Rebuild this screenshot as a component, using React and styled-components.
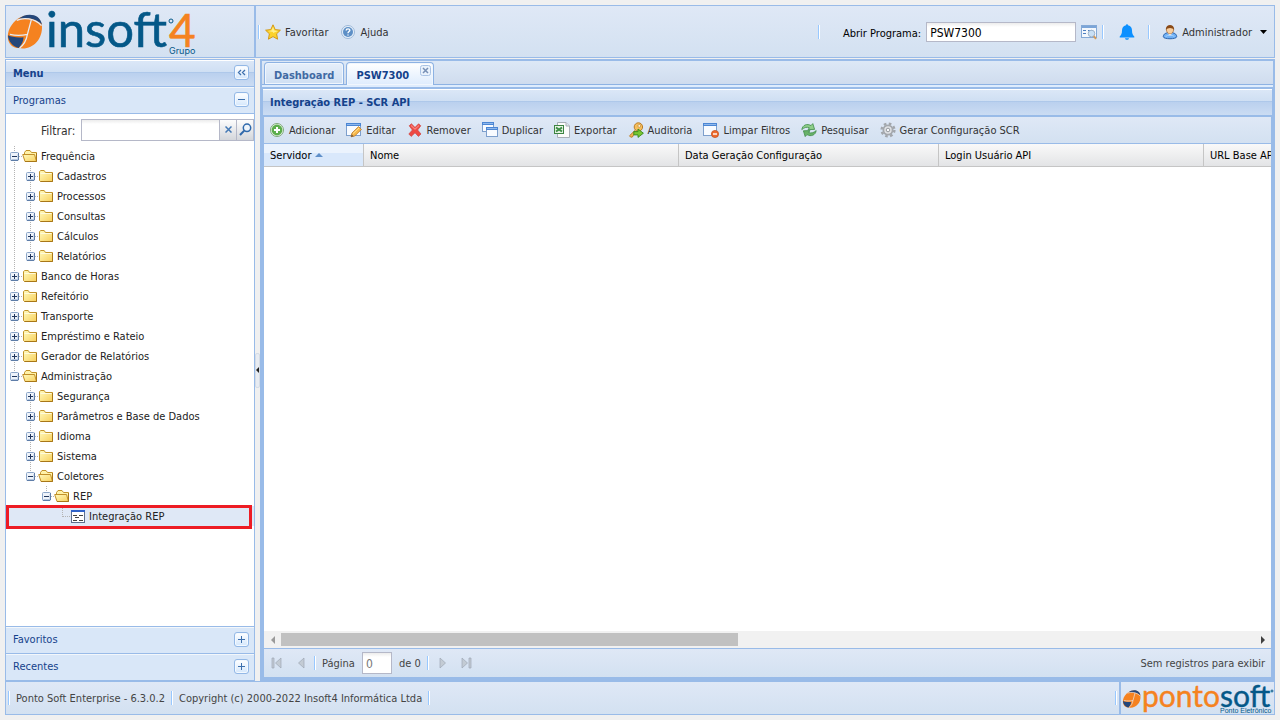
import React from "react";
import styled, { createGlobalStyle, css } from "styled-components";

const c = {
  border: "#99bbe8",
  title: "#15428b",
  text: "#333333",
  bar: "linear-gradient(#dfe8f6, #d3e1f1)",
  font: '"DejaVu Sans Condensed", Tahoma, "DejaVu Sans", sans-serif',
};

const GlobalStyle = createGlobalStyle`
  *, *::before, *::after { box-sizing: border-box; }
  body { margin: 0; background: #f0f0f0; font: 11px/14px ${c.font}; color: ${c.text}; }
  button, input { font: inherit; color: inherit; }
  button { margin: 0; padding: 0; border: 0; background: none; cursor: pointer; }
  svg { display: block; flex: none; }
  ul { margin: 0; padding: 0; list-style: none; }
`;

/* ---------- page frame ---------- */
const Page = styled.div`
  display: flex;
  flex-direction: column;
  min-height: 100vh;
  padding: 5px;
`;
const Header = styled.header`
  display: flex;
  height: 53px;
  margin-bottom: 1px;
  border: 1px solid ${c.border};
  background: ${c.bar};
`;
const Brand = styled.a`
  flex: none;
  width: 250px;
  border-right: 2px solid ${c.border};
`;
const LogoSvg = styled.svg`
  overflow: visible;
`;
const TopBar = styled.div`
  flex: 1;
  display: flex;
  align-items: center;
  min-width: 0;
  padding: 1px 7px 0 2px;
`;
const Spacer = styled.div`
  flex: 1;
`;
const Separator = styled.span`
  flex: none;
  width: 2px;
  height: 14px;
  border-left: 1px solid #98c8ff;
  border-right: 1px solid #fff;
`;
const Text = styled.span`
  padding-top: 2px;
  white-space: nowrap;
`;
const BarButton = styled.button`
  display: flex;
  align-items: center;
  gap: 4px;
  white-space: nowrap;
`;
const TopGroup = styled.div`
  display: flex;
  align-items: center;
  gap: ${(p) => p.$gap}px;
  padding: ${(p) => p.$pad || "0"};
`;
const ProgramLabel = styled.label`
  padding-top: 4px;
  color: #000;
  white-space: nowrap;
`;
const TextInput = styled.input`
  min-width: 0;
  width: ${(p) => p.$width};
  height: ${(p) => p.$height}px;
  padding: 3px 3px 1px;
  border: 1px solid #b5b8c8;
  border-radius: 0;
  outline: 0;
  background: linear-gradient(#ececec, #fff 4px);
  font-size: 12px;
  color: ${(p) => (p.$muted ? "#777" : "#000")};
`;
const Body = styled.div`
  flex: 1;
  display: flex;
  min-height: 0;
`;

/* ---------- side menu ---------- */
const Side = styled.nav`
  flex: none;
  display: flex;
  flex-direction: column;
  width: 250px;
  border: 1px solid ${c.border};
  background: #fff;
`;
const titleBar = css`
  background: linear-gradient(
    #fff 0 1px, #dbe7f7 1px, #cfdff3 12px, #aec8ea 12px 13px, #bad0ee 13px, #cbdcf3
  );
  color: ${c.title};
  font-weight: bold;
`;
const SideTitle = styled.div`
  display: flex;
  align-items: center;
  justify-content: space-between;
  height: 27px;
  padding: 0 5px 0 7px;
  border-bottom: 1px solid ${c.border};
  ${titleBar}
`;
const SectionTitle = styled.div`
  display: flex;
  align-items: center;
  justify-content: space-between;
  height: 27px;
  padding: 0 5px 0 7px;
  border: solid ${c.border};
  border-width: ${(p) => (p.$below ? "1px 0 0" : "0 0 1px")};
  box-shadow: inset 0 1px #f3f7fb;
  background: #d9e7f8;
  color: ${c.title};
`;
const ToolButton = styled.button`
  display: grid;
  place-items: center;
  width: 15px;
  height: 15px;
  margin-bottom: 2px;
  border: 1px solid #93b8e6;
  border-radius: 3px;
  background: linear-gradient(#fff, #d4e7fc);
  box-shadow: inset 0 0 0 1px #f4f9ff;
`;
const FilterRow = styled.div`
  display: flex;
  align-items: center;
  padding: 5px 0 5px 35px;
  color: #000;
  font-size: 12px;
`;
const FilterLabel = styled.label`
  width: 40px;
  padding-top: 2px;
  white-space: nowrap;
  color: ${c.text};
`;
const FilterInput = styled(TextInput)`
  flex: 1;
`;
const Trigger = styled.button`
  flex: none;
  display: grid;
  place-items: center;
  width: 17px;
  height: 22px;
  padding-bottom: 2px;
  border: solid #b5b8c8;
  border-width: 1px 1px 1px 0;
  background: linear-gradient(#fdfdfd, #d3d6db);
`;
const TreeArea = styled.div`
  flex: 1;
`;
const TreeRow = styled.div`
  position: relative;
  display: flex;
  align-items: center;
  height: 20px;
  color: #000;
  white-space: nowrap;
  background: ${(p) => (p.$selected ? "#dfe8f6" : "none")};
`;
const RowText = styled.a`
  padding: 2px 0 0 3px;
  color: #222;
  text-decoration: none;
`;
const Marker = styled.span`
  position: absolute;
  inset: -1px 2px -3px 0;
  border: 3px solid #ed1c24;
`;
const Splitter = styled.div`
  flex: none;
  display: flex;
  align-items: center;
  width: 5px;
`;
const SplitHandle = styled.button`
  display: grid;
  place-items: center;
  width: 5px;
  height: 35px;
  border: 1px solid #d5dce6;
  border-radius: 2px;
  background: #e8ecf2;
`;

/* ---------- work area ---------- */
const Main = styled.main`
  flex: 1;
  display: flex;
  flex-direction: column;
  min-width: 0;
  border: 2px solid ${c.border};
  background: ${c.border};
`;
const TabStrip = styled.div`
  display: flex;
  align-items: flex-end;
  gap: 2px;
  height: 24px;
  padding: 0 2px;
  border-bottom: 1px solid #8db2e3;
  background: linear-gradient(#dde8f6, #cfdcee);
`;
const Tab = styled.button`
  position: relative;
  height: ${(p) => (p.$active ? 23 : 22)}px;
  margin-bottom: ${(p) => (p.$active ? -1 : 0)}px;
  padding: ${(p) => (p.$active ? "4px 24px 0 9px" : "4px 9px 0")};
  border: 1px solid #8db2e3;
  border-bottom: 0;
  border-radius: 4px 4px 0 0;
  box-shadow: inset 0 0 0 1px #f0f6fd;
  background: ${(p) => (p.$active ? "linear-gradient(#fff, #deecfd)" : "linear-gradient(#e6effa, #cfdff3)")};
  color: ${(p) => (p.$active ? c.title : "#416aa3")};
  font-weight: bold;
  white-space: nowrap;
`;
const TabBox = styled.div`
  position: relative;
  display: flex;
  align-items: flex-end;
`;
const TabClose = styled.button`
  position: absolute;
  top: 3px;
  right: 3px;
`;
const TabEdge = styled.div`
  height: 2px;
  background: #deecfd;
`;
const Panel = styled.section`
  flex: 1;
  display: flex;
  flex-direction: column;
  margin-top: 2px;
  padding: 0 1px 2px;
`;
const PanelTitle = styled.h1`
  height: 26px;
  margin: 0;
  padding: 7px 7px 0;
  font-size: 11px;
  line-height: 14px;
  ${titleBar}
`;
const PanelBody = styled.div`
  flex: 1;
  display: flex;
  flex-direction: column;
  margin: 2px 1px 0;
  background: #fff;
`;
const Toolbar = styled.div`
  display: flex;
  align-items: center;
  gap: 11px;
  height: 27px;
  padding: 0 5px;
  border-bottom: 1px solid ${c.border};
  background: ${c.bar};
`;
const GridArea = styled.div`
  flex: 1;
  position: relative;
  overflow: hidden;
`;
const Grid = styled.table`
  position: absolute;
  table-layout: fixed;
  width: 2200px;
  border-collapse: separate;
  border-spacing: 0;
`;
const HeadCell = styled.th`
  height: 23px;
  width: ${(p) => p.$width};
  padding: 0 6px;
  border: solid #c5c5c5;
  border-width: 0 1px 1px 0;
  background: ${(p) =>
    p.$sorted ? "linear-gradient(#ebf3fd 0 9px, #d9e8fb 9px)" : "linear-gradient(#f9f9f9, #e3e4e6)"};
  color: #000;
  font-weight: normal;
  text-align: left;
  white-space: nowrap;
`;
const HeadLabel = styled.span`
  display: flex;
  align-items: center;
  gap: 4px;
`;
const ScrollBar = styled.div`
  display: flex;
  align-items: center;
  height: 17px;
  background: #f1f1f1;
`;
const ScrollButton = styled.button`
  flex: none;
  display: grid;
  place-items: center;
  width: 17px;
  height: 17px;
`;
const ScrollTrack = styled.div`
  flex: 1;
`;
const ScrollThumb = styled.div`
  width: 47%;
  height: 13px;
  background: #c1c1c1;
`;
const Pager = styled.div`
  display: flex;
  align-items: center;
  height: 29px;
  padding: 0 6px 0 7px;
  border-top: 1px solid ${c.border};
  background: ${c.bar};
  color: #444;
`;
const PageButtons = styled.div`
  display: flex;
  align-items: center;
  gap: 14px;
  width: ${(p) => p.$width}px;
`;
const PageNumber = styled.label`
  display: flex;
  align-items: center;
  gap: 7px;
  padding: 0 6px;
`;

/* ---------- footer ---------- */
const Footer = styled.footer`
  display: flex;
  height: 34px;
  border: 1px solid ${c.border};
  background: ${c.bar};
  color: #444;
`;
const FooterBar = styled.div`
  flex: 1;
  display: flex;
  align-items: center;
  gap: 6px;
  padding: 0 2px;
`;
const FooterBrand = styled.a`
  flex: none;
  width: 155px;
  border-left: 2px solid ${c.border};
`;

/* ---------- icons ---------- */
const Svg = ({ w = 16, h = w, children }) => (
  <svg width={w} height={h} viewBox={`0 0 ${w} ${h}`} fill="none" aria-hidden="true">{children}</svg>
);
const StarIcon = () => (
  <Svg>
    <path d="M8 .8 10.2 5.6 15.4 6.2 11.6 9.8 12.6 15.2 8 12.6 3.4 15.2 4.4 9.8 .6 6.2 5.8 5.6Z" fill="#fbd22c" stroke="#d49a17" strokeLinejoin="round" />
    <path d="M8 2.8 9.4 6.4 13 7 8 9Z M3 7 6.4 6.6 8 3V8Z" fill="#fff08c" />
  </Svg>
);
const HelpIcon = () => (
  <Svg>
    <circle cx="8" cy="8" r="6.5" fill="#e9f1fa" stroke="#9db9d9" />
    <circle cx="8" cy="8" r="5" fill="#5d8fc6" />
    <path d="M6.2 6.6C6.2 4.2 10 4.4 9.8 6.4 9.7 7.5 8 7.6 8 9.2M8 10.4V11.6" stroke="#fff" strokeWidth="1.4" />
  </Svg>
);
const FormSearchIcon = () => (
  <Svg>
    <rect x=".5" y="1.5" width="15" height="12" fill="#f4f8fd" stroke="#84a9d6" />
    <path d="M1 2H15V4H1Z" fill="#7ba5d8" />
    <path d="M2 6.5H5M2 9.5H5M7 6.5H12" stroke="#4e7fc0" />
    <circle cx="10.5" cy="9.5" r="3.3" fill="#c9e0f5" stroke="#9eb3cb" />
    <path d="M12.8 12 15 14.8" stroke="#d39a58" strokeWidth="2" />
  </Svg>
);
const BellIcon = () => (
  <Svg>
    <path d="M7 1.2C7-.1 9-.1 9 1.2 12 1.7 13 4 13 6.5 13 10 14 11.2 15.3 12.5V13.6H.7V12.5C2 11.2 3 10 3 6.5 3 4 4 1.7 7 1.2ZM6 14.2H10C9.8 16.4 6.2 16.4 6 14.2Z" fill="#0c90ff" />
  </Svg>
);
const UserIcon = () => (
  <Svg>
    <path d="M1.3 12.8C1.3 9.8 4 8.6 8 8.6S14.7 9.8 14.7 12.8C14.4 15.4 1.6 15.4 1.3 12.8Z" fill="#6fb0f5" stroke="#2f66ad" />
    <path d="M3.5 12.6C5 10.8 11 10.8 12.5 12.6" stroke="#a9d2fb" />
    <path d="M5.4 9.2 8 11.6 10.6 9.2Z" fill="#fff" />
    <path d="M4.4 4.6C4.2 8.4 6.3 9.8 8 9.8S11.8 8.4 11.6 4.6L10 3H6Z" fill="#f8cf9f" stroke="#a5672f" strokeWidth=".7" />
    <path d="M4 6C2.8-.6 13.2-.6 12 6 11.4 4.2 9.4 4.6 8 4 6.6 4.6 4.6 4.2 4 6Z" fill="#8a4a17" />
  </Svg>
);
const DownArrow = () => <Svg w={7} h={4}><path d="M0 0H7L3.5 4Z" fill="#000" /></Svg>;
const AddIcon = () => (
  <Svg>
    <circle cx="8" cy="8" r="6.5" fill="#eef6ec" stroke="#7ea87a" />
    <circle cx="8" cy="8" r="5.4" fill="#5cae4c" />
    <path d="M8 5V11M5 8H11" stroke="#fff" strokeWidth="2" />
  </Svg>
);
const Win = ({ x = 0, y = 0, w = 14, h = 12 }) => (
  <>
    <rect x={x + 0.5} y={y + 0.5} width={w - 1} height={h - 1} fill="#f8fbff" stroke="#7d9fcc" />
    <path d={`M${x} ${y}H${x + w}V${y + 3}H${x}Z`} fill="#4b86d4" />
    <path d={`M${x + 1} ${y + 1.5}H${x + w - 1}`} stroke="#8fb8ec" />
  </>
);
const EditIcon = () => (
  <Svg>
    <Win x={0} y={1} w={15} h={13} />
    <path d="M5 14.8 6 11 12.6 4.6 15.4 7.4 8.8 14Z" fill="#f8b84a" stroke="#b9782a" strokeWidth=".8" />
    <path d="M7 11.6 13 6" stroke="#ffe39a" />
    <path d="M5 15 5.7 12.3 7.6 14.2Z" fill="#7b5a3a" />
  </Svg>
);
const RemoveIcon = () => (
  <Svg>
    <path d="M2.2 3.8 4.4 1.8 8 5.4 11.6 1.8 13.8 3.8 10.6 8 14 12 11.4 14.4 8 10.8 4.2 14.4 1.8 12 5.4 8Z" fill="#ee4a44" stroke="#cf4340" strokeWidth=".7" strokeLinejoin="round" />
    <path d="M4 3.5 8 7.3 12 3.5" stroke="#ff9d96" />
  </Svg>
);
const CopyIcon = () => (
  <Svg><Win x={0} y={0} w={12} h={10} /><Win x={4} y={5} w={12} h={10} /></Svg>
);
const ExcelIcon = () => (
  <Svg>
    <path d="M3.5.5H12L15.5 4V15.5H3.5Z" fill="#fbfbfb" stroke="#a7aeb6" />
    <path d="M12 .5V4H15.5" fill="#dfe5ea" stroke="#a7aeb6" />
    <rect x=".5" y="3.5" width="9" height="8" fill="#e6f3e4" stroke="#3d8443" />
    <path d="M2 5.5 8 9.5M8 5.5 2 9.5" stroke="#3d8f45" strokeWidth="2" />
  </Svg>
);
const KeyIcon = () => (
  <Svg>
    <path d="M7.2 8.2 1.5 13.8 2.8 15.2 4.4 15 6 12.2 8.8 9.8" fill="#f2b650" stroke="#b97c28" />
    <circle cx="10.4" cy="5" r="4.2" fill="#f5be5c" stroke="#b97c28" />
    <circle cx="11.3" cy="3.9" r="1.4" fill="#fff5d8" stroke="#b97c28" strokeWidth=".6" />
    <path d="M5.8 9.6H10V7L15.4 11.2 10 15.4V12.9H5.8Z" fill="#79c832" stroke="#37881d" strokeWidth=".9" />
  </Svg>
);
const ClearIcon = () => (
  <Svg>
    <Win x={0} y={1} w={14} h={13} />
    <circle cx="12" cy="12" r="3.6" fill="#ee6a2c" stroke="#c24a17" strokeWidth=".7" />
    <path d="M10 12H14" stroke="#fff" strokeWidth="1.4" />
  </Svg>
);
const RefreshIcon = () => (
  <Svg>
    <path d="M.8 7.6C1.4 3 6.2 1.2 10 3.6L11.8 1.6 13.6 7.4 7 7.6 8.4 5.8C6 4.8 3.4 5.2 .8 7.6Z" fill="#8fce8a" stroke="#3f8c47" strokeWidth=".8" strokeLinejoin="round" />
    <path d="M15.2 8.6C14.6 13.2 9.8 15 6 12.6L4.2 14.6 2.4 8.8 9 8.6 7.6 10.4C10 11.4 12.6 11 15.2 8.6Z" fill="#68b268" stroke="#3f8c47" strokeWidth=".8" strokeLinejoin="round" />
  </Svg>
);
const GearIcon = () => (
  <Svg>
    <circle cx="8" cy="8" r="6.4" stroke="#a2a6ab" strokeWidth="2.4" strokeDasharray="2.6 2.43" />
    <circle cx="8" cy="8" r="4.6" fill="#e1e3e6" stroke="#a4a8ad" strokeWidth="1.8" />
    <circle cx="8" cy="8" r="1.8" fill="#f8f9fb" stroke="#95999e" />
  </Svg>
);
const FolderIcon = ({ open }) => (
  <Svg>
    <defs>
      <linearGradient id="folder" x1="0" y1="0" x2="1" y2="1">
        <stop offset="0" stopColor="#fffbc0" />
        <stop offset="1" stopColor="#f8d05c" />
      </linearGradient>
    </defs>
    {open ? (
      <>
        <path d="M2.5 12V4.5L4 2.5H8L9.5 4.5H14.5V13" fill="#fff2a8" stroke="#c2932a" />
        <path d="M.7 6.5H12.5L14.5 13.5H3Z" fill="url(#folder)" stroke="#c2902a" />
        <path d="M3 13.5H14.5V5" stroke="#a87718" />
      </>
    ) : (
      <>
        <path d="M1.5 12.5V3.5L2.8 2.5H6.2L7.5 4.5H14.5V13.5H2.5Z" fill="url(#folder)" stroke="#c2932a" />
        <path d="M2.5 5.5H13.5" stroke="#fffbdc" />
        <path d="M2.5 13.5H14.5V5" stroke="#a87718" />
      </>
    )}
  </Svg>
);
const FormIcon = () => (
  <Svg>
    <rect x="1.5" y="2.5" width="13" height="12" fill="#fff" stroke="#5d6f8e" />
    <path d="M1 2H15V4H1Z" fill="#2f62c9" />
    <path d="M3 7.5H7M9 7.5H13M3 12.5H7M9 12.5H13M5 9.5H9" stroke="#444" />
  </Svg>
);
const dots = { stroke: "#b4b4b4", strokeDasharray: "1 1" };
/* One 16px guide cell: a passing line, or an elbow with an optional expander box. */
const Guide = ({ kind, box }) => (
  <Svg w={16} h={20}>
    {kind !== "none" && <path d={kind === "end" ? "M8.5 0V11" : "M8.5 0V20"} {...dots} />}
    {(kind === "end" || kind === "tee") && <path d="M9 10.5H16" {...dots} />}
    {box && (
      <>
        <rect x="4.5" y="6.5" width="8" height="8" rx="1" fill="#eef3fa" stroke="#8ba5c8" />
        <path d="M5.5 13.5H12M12 8V14" stroke="#b4c6de" />
        <path d="M5 14.5H12M12.5 7V14" stroke="#5f7ea9" />
        <path d={box === "plus" ? "M6 10.5H11M8.5 8V13" : "M6 10.5H11"} stroke="#20365c" />
      </>
    )}
  </Svg>
);
const Swirl = ({ x, y, s }) => (
  <g transform={`translate(${x} ${y}) scale(${s})`}>
    <path d="M11 35C0 35-4 22 4 11 13-2 33-3 35 12 36 27 24 38 11 35Z" fill="#f58220" />
    <path d="M11 5C18-1.5 33-1.5 35 11 29 5 21 3.5 11 5Z" fill="#24477b" />
    <path d="M0 22C4 24 10 24.5 16 24 16 28 14 32 11 35 5 34 0 28 0 22Z" fill="#24477b" />
    <path d="M2 21C9 22.5 15 22 20 21L24 6M20 21C19 27 16 32 12 35M9 6.5C16 3.5 27 4 34.5 12" stroke="#e6edf6" strokeWidth="1.3" fill="none" />
  </g>
);
const InsoftLogo = () => (
  <LogoSvg width="200" height="50" viewBox="0 0 200 50" role="img" aria-label="Grupo insoft4">
    <Swirl x={2} y={8} s={0.97} />
    <circle cx="165" cy="15" r="2" fill="none" stroke="#045888" />
    <g fontFamily="Lato, sans-serif" fill="#045888">
      <text x="40" y="41" fontSize="49" stroke="#045888" strokeWidth=".6">insoft</text>
      <text x="163" y="41" fontSize="46" fill="#f58220" stroke="#f58220" strokeWidth=".6">4</text>
      <text x="163" y="48" fontSize="9" fontFamily="Inter, sans-serif">Grupo</text>
    </g>
  </LogoSvg>
);
const PontoLogo = () => (
  <LogoSvg width="153" height="32" viewBox="0 0 153 32" role="img" aria-label="Pontosoft Ponto Eletrônico">
    <Swirl x={2} y={8} s={0.5} />
    <circle cx="151" cy="9" r="1" fill="none" stroke="#045888" />
    <g fontFamily="Lato, sans-serif" fill="#045888">
      <text x="21" y="25" fontSize="30" fill="#f58220" stroke="#f58220" strokeWidth=".4">
        ponto<tspan fill="#045888" stroke="#045888">soft</tspan>
      </text>
      <text x="99" y="31" fontSize="7" fontFamily="Liberation Sans, sans-serif">Ponto Eletrônico</text>
    </g>
  </LogoSvg>
);
const glyphs = {
  collapse: "M4 1 1.5 3.5 4 6M8 1 5.5 3.5 8 6",
  minus: "M1 3.5H8",
  plus: "M1 3.5H8M4.5 0V7",
};
const Tool = ({ kind, label }) => (
  <ToolButton aria-label={label}>
    <Svg w={9} h={7}><path d={glyphs[kind]} stroke="#3e70ad" strokeWidth={kind === "collapse" ? 1.3 : 1} /></Svg>
  </ToolButton>
);
const pagerPaths = {
  first: "M1 1H3V11H1ZM10 1V11L4.5 6Z",
  prev: "M8 1V11L2.5 6Z",
  next: "M3 1V11L8.5 6Z",
  last: "M1 1V11L6.5 6ZM8 1H10V11H8Z",
};
const PageButton = ({ kind, label }) => (
  <button aria-label={label} disabled>
    <Svg w={11} h={12}><path d={pagerPaths[kind]} fill="#c3cbd4" stroke="#9ea8b4" strokeWidth=".7" /></Svg>
  </button>
);

/* ---------- data ---------- */
const closed = (label) => ({ label, box: "plus" });
const tree = [
  { label: "Frequência", box: "minus", children: ["Cadastros", "Processos", "Consultas", "Cálculos", "Relatórios"].map(closed) },
  ...["Banco de Horas", "Refeitório", "Transporte", "Empréstimo e Rateio", "Gerador de Relatórios"].map(closed),
  {
    label: "Administração",
    box: "minus",
    children: [
      ...["Segurança", "Parâmetros e Base de Dados", "Idioma", "Sistema"].map(closed),
      {
        label: "Coletores",
        box: "minus",
        children: [{ label: "REP", box: "minus", children: [{ label: "Integração REP", selected: true }] }],
      },
    ],
  },
];
const actions = [
  ["Adicionar", AddIcon],
  ["Editar", EditIcon],
  ["Remover", RemoveIcon],
  ["Duplicar", CopyIcon],
  ["Exportar", ExcelIcon],
  ["Auditoria", KeyIcon],
  ["Limpar Filtros", ClearIcon],
  ["Pesquisar", RefreshIcon],
  ["Gerar Configuração SCR", GearIcon],
];
const columns = [
  { label: "Servidor", width: "100px", sorted: true },
  { label: "Nome", width: "315px" },
  { label: "Data Geração Configuração", width: "260px" },
  { label: "Login Usuário API", width: "265px" },
  { label: "URL Base API", width: "auto" },
];

const Nodes = ({ nodes, trail = [] }) => (
  <ul role={trail.length ? "group" : "tree"}>
    {nodes.map((n, i) => {
      const last = i === nodes.length - 1;
      return (
        <li key={n.label} role="treeitem" aria-selected={!!n.selected} aria-expanded={n.box ? n.box === "minus" : undefined}>
          <TreeRow $selected={n.selected}>
            {trail.map((k, j) => <Guide key={j} kind={k} />)}
            <Guide kind={last ? "end" : "tee"} box={n.box} />
            {n.box ? <FolderIcon open={n.box === "minus"} /> : <FormIcon />}
            <RowText href="#">{n.label}</RowText>
            {n.selected && <Marker />}
          </TreeRow>
          {n.children && <Nodes nodes={n.children} trail={[...trail, last ? "none" : "pass"]} />}
        </li>
      );
    })}
  </ul>
);

export default function App() {
  return (
    <Page>
      <GlobalStyle />
      <Header>
        <Brand href="#"><InsoftLogo /></Brand>
        <TopBar>
          <Separator />
          <TopGroup $gap={12} $pad="0 0 0 5px">
            <BarButton><StarIcon /><Text>Favoritar</Text></BarButton>
            <BarButton><HelpIcon /><Text>Ajuda</Text></BarButton>
          </TopGroup>
          <Spacer />
          <Separator />
          <TopGroup $gap={5} $pad="0 5px 0 23px">
            <ProgramLabel htmlFor="program">Abrir Programa:</ProgramLabel>
            <TextInput id="program" defaultValue="PSW7300" $width="150px" $height={20} />
            <button aria-label="Localizar programa"><FormSearchIcon /></button>
          </TopGroup>
          <Separator />
          <TopGroup $pad="0 13px 0 15px">
            <button aria-label="Notificações"><BellIcon /></button>
          </TopGroup>
          <Separator />
          <TopGroup $gap={8} $pad="0 0 0 12px">
            <BarButton><UserIcon /><Text>Administrador</Text></BarButton>
            <button aria-label="Opções do usuário"><DownArrow /></button>
          </TopGroup>
        </TopBar>
      </Header>

      <Body>
        <Side>
          <SideTitle><Text>Menu</Text><Tool kind="collapse" label="Recolher menu" /></SideTitle>
          <SectionTitle><Text>Programas</Text><Tool kind="minus" label="Recolher Programas" /></SectionTitle>
          <FilterRow>
            <FilterLabel htmlFor="filter">Filtrar:</FilterLabel>
            <FilterInput id="filter" $height={22} />
            <Trigger aria-label="Limpar">
              <Svg w={7}><path d="M.5.5 6.5 6.5M6.5.5.5 6.5" stroke="#4479b5" strokeWidth="1.5" /></Svg>
            </Trigger>
            <Trigger aria-label="Buscar">
              <Svg w={13}><circle cx="8" cy="4.8" r="3.7" fill="#eef5fc" stroke="#2f69ab" strokeWidth="1.5" /><path d="M5.2 7.6 1 12" stroke="#2f69ab" strokeWidth="2" /></Svg>
            </Trigger>
          </FilterRow>
          <TreeArea><Nodes nodes={tree} /></TreeArea>
          <SectionTitle $below>Favoritos<Tool kind="plus" label="Expandir Favoritos" /></SectionTitle>
          <SectionTitle $below>Recentes<Tool kind="plus" label="Expandir Recentes" /></SectionTitle>
        </Side>

        <Splitter>
          <SplitHandle aria-label="Recolher painel">
            <Svg w={3} h={6}><path d="M3 0V6L0 3Z" fill="#222" /></Svg>
          </SplitHandle>
        </Splitter>

        <Main>
          <TabStrip>
            <Tab>Dashboard</Tab>
            <TabBox>
              <Tab $active>PSW7300</Tab>
              <TabClose aria-label="Fechar PSW7300">
                <Svg w={11}>
                  <rect x=".5" y=".5" width="10" height="10" rx="2" fill="#e9f2fc" stroke="#a9c3e4" />
                  <path d="M3 3 8 8M8 3 3 8" stroke="#7790b5" strokeWidth="1.5" />
                </Svg>
              </TabClose>
            </TabBox>
          </TabStrip>
          <TabEdge />
          <Panel>
            <PanelTitle>Integração REP - SCR API</PanelTitle>
            <PanelBody>
              <Toolbar>
                {actions.map(([label, Icon]) => <BarButton key={label}><Icon /><Text>{label}</Text></BarButton>)}
              </Toolbar>
              <GridArea>
                <Grid>
                  <thead>
                    <tr>
                      {columns.map((col) => (
                        <HeadCell key={col.label} $width={col.width} $sorted={col.sorted}>
                          <HeadLabel>
                            <Text>{col.label}</Text>
                            {col.sorted && <Svg w={8} h={4}><path d="M4 0 8 4H0Z" fill="#5f8fc9" /></Svg>}
                          </HeadLabel>
                        </HeadCell>
                      ))}
                    </tr>
                  </thead>
                </Grid>
              </GridArea>
              <ScrollBar>
                <ScrollButton aria-label="Rolar para a esquerda"><Svg w={4} h={8}><path d="M4 0V8L0 4Z" fill="#9a9a9a" /></Svg></ScrollButton>
                <ScrollTrack><ScrollThumb /></ScrollTrack>
                <ScrollButton aria-label="Rolar para a direita"><Svg w={4} h={8}><path d="M0 0V8L4 4Z" fill="#404040" /></Svg></ScrollButton>
              </ScrollBar>
              <Pager>
                <PageButtons $width={43}>
                  <PageButton kind="first" label="Primeira página" />
                  <PageButton kind="prev" label="Página anterior" />
                </PageButtons>
                <Separator />
                <PageNumber>
                  <Text>Página</Text>
                  <TextInput defaultValue="0" $width="30px" $height={22} $muted />
                  <Text>de 0</Text>
                </PageNumber>
                <Separator />
                <TopGroup $gap={13} $pad="0 0 0 8px">
                  <PageButton kind="next" label="Próxima página" />
                  <PageButton kind="last" label="Última página" />
                </TopGroup>
                <Spacer />
                <Text>Sem registros para exibir</Text>
              </Pager>
            </PanelBody>
          </Panel>
        </Main>
      </Body>

      <Footer>
        <FooterBar>
          <Separator />
          <Text>Ponto Soft Enterprise - 6.3.0.2</Text>
          <Separator />
          <Text>Copyright (c) 2000-2022 Insoft4 Informática Ltda</Text>
          <Separator />
          <Spacer />
          <Separator />
        </FooterBar>
        <FooterBrand href="#"><PontoLogo /></FooterBrand>
      </Footer>
    </Page>
  );
}
